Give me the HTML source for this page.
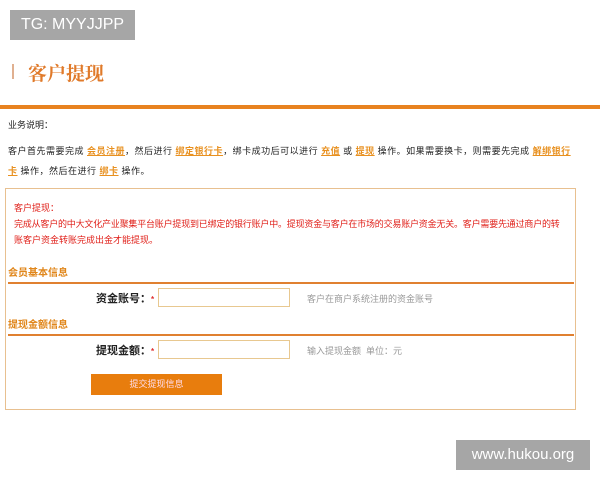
<!DOCTYPE html>
<html><head><meta charset="utf-8"><style>
body{margin:0;width:600px;height:480px;background:#fff;position:relative;overflow:hidden;font-family:"Liberation Sans","Noto Sans CJK SC",sans-serif;}
.a{position:absolute;white-space:nowrap;}
.s{font-size:9px;color:#222;}
.o{color:#e8901f;text-decoration:underline;font-weight:bold;}
.r{font-size:9px;color:#e0201a;}
.h{font-size:10px;color:#e0861a;font-weight:bold;}
.in{position:absolute;width:130px;height:17px;border:1px solid #e8c890;background:#fff;}
.g{font-size:9px;color:#999;}
.l{font-size:11px;color:#222;font-weight:bold;}
</style></head><body>
<div class="a" style="left:10px;top:10px;width:125px;height:30px;background:#a6a6a6;color:#fff;font-size:16px;line-height:30px;text-align:center;">TG: MYYJJPP</div>
<div class="a" style="left:12px;top:64px;width:2px;height:15px;background:#e0b090;"></div>
<div class="a" style="left:28px;top:59px;font-size:19px;color:#e07a2a;font-family:'Liberation Serif','Noto Serif CJK SC',serif;font-weight:bold;">客户提现</div>
<div class="a" style="left:0;top:105px;width:600px;height:4px;background:#e8821f;"></div>
<div class="a s" style="left:8px;top:118px;">业务说明：</div>
<div class="a s" style="left:8px;top:144px;letter-spacing:0.5px;">客户首先需要完成 <span class="o">会员注册</span>，然后进行 <span class="o">绑定银行卡</span>，绑卡成功后可以进行 <span class="o">充值</span> 或 <span class="o">提现</span> 操作。如果需要换卡，则需要先完成 <span class="o">解绑银行</span></div>
<div class="a s" style="left:8px;top:164px;letter-spacing:0.5px;"><span class="o">卡</span> 操作，然后在进行 <span class="o">绑卡</span> 操作。</div>
<div class="a" style="left:5px;top:188px;width:569px;height:220px;border:1px solid #e8c090;"></div>
<div class="a r" style="left:14px;top:201px;">客户提现：</div>
<div class="a r" style="left:14px;top:217px;letter-spacing:-0.2px;">完成从客户的中大文化产业聚集平台账户提现到已绑定的银行账户中。提现资金与客户在市场的交易账户资金无关。客户需要先通过商户的转</div>
<div class="a r" style="left:14px;top:233px;">账客户资金转账完成出金才能提现。</div>
<div class="a h" style="left:8px;top:264px;">会员基本信息</div>
<div class="a" style="left:8px;top:282px;width:566px;height:2px;background:#e08030;"></div>
<div class="a l" style="left:96px;top:290px;">资金账号：<span style="color:#e03030;font-size:8px;">*</span></div>
<div class="in" style="left:158px;top:288px;"></div>
<div class="a g" style="left:307px;top:292px;">客户在商户系统注册的资金账号</div>
<div class="a h" style="left:8px;top:316px;">提现金额信息</div>
<div class="a" style="left:8px;top:334px;width:566px;height:2px;background:#e08030;"></div>
<div class="a l" style="left:96px;top:342px;">提现金额：<span style="color:#e03030;font-size:8px;">*</span></div>
<div class="in" style="left:158px;top:340px;"></div>
<div class="a g" style="left:307px;top:344px;">输入提现金额&nbsp; 单位：元</div>
<div class="a" style="left:91px;top:374px;width:131px;height:21px;background:#e87d0d;color:#fde;font-size:9px;line-height:21px;text-align:center;">提交提现信息</div>
<div class="a" style="left:456px;top:440px;width:134px;height:30px;background:#a6a6a6;color:#fff;font-size:15px;line-height:30px;text-align:center;">www.hukou.org</div>
</body></html>
